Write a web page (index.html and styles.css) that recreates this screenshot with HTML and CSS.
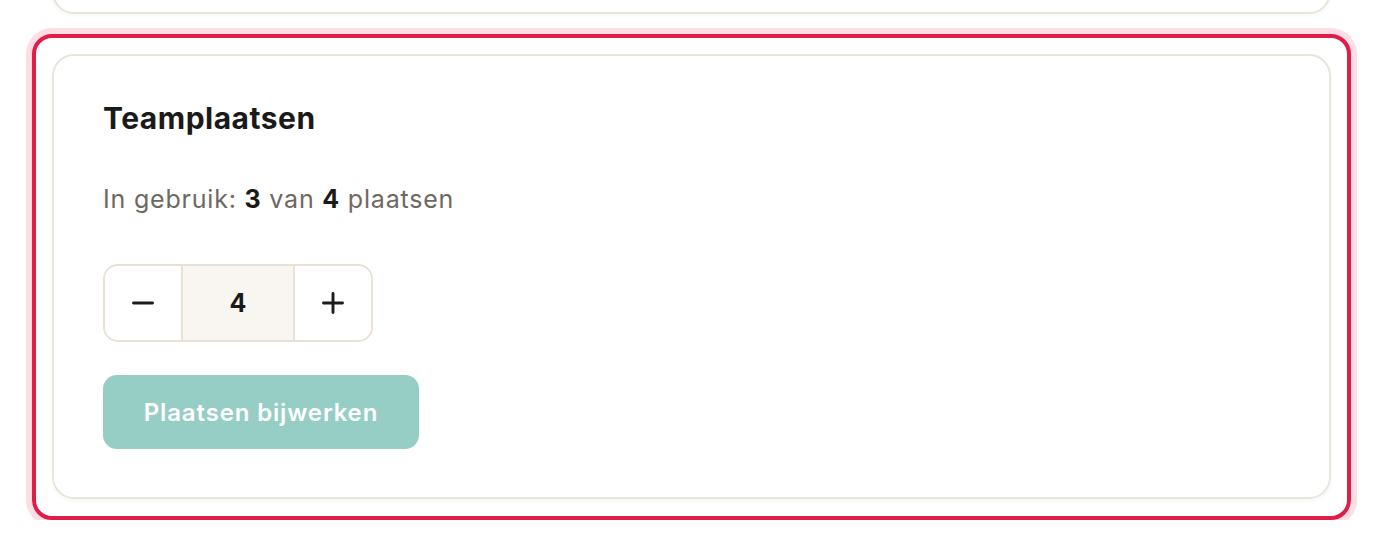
FILE: index.html
```html
<!DOCTYPE html>
<html lang="nl">
<head>
<meta charset="utf-8">
<title>Teamplaatsen</title>
<link rel="stylesheet" href="styles.css">
</head>
<body>
<div class="page">
  <div class="card card-prev"></div>
  <div class="highlight">
    <section class="card card-seats">
      <h2 class="title">Teamplaatsen</h2>
      <p class="usage">In gebruik: <strong>3</strong> van <strong>4</strong> plaatsen</p>
      <div class="stepper">
        <button class="step-btn" type="button" aria-label="Minder">
          <svg width="22" height="22" viewBox="0 0 22 22"><path d="M1.5 11h19" stroke="#1c1c1c" stroke-width="2.9" stroke-linecap="round"/></svg>
        </button>
        <div class="step-value">4</div>
        <button class="step-btn" type="button" aria-label="Meer">
          <svg width="22" height="22" viewBox="0 0 22 22"><path d="M1.5 11h19M11 1.5v19" stroke="#1c1c1c" stroke-width="2.9" stroke-linecap="round"/></svg>
        </button>
      </div>
      <button class="primary" type="button">Plaatsen bijwerken</button>
    </section>
  </div>
</div>
</body>
</html>
```

FILE: styles.css
```css
html, body {
  margin: 0;
  padding: 0;
  background: #ffffff;
}

body {
  font-family: Inter, "Liberation Sans", sans-serif;
  color: #1b1b1b;
  overflow: hidden;
}

.page {
  padding: 0 33px 0 32px;
  display: flex;
  flex-direction: column;
}

.card {
  background: #ffffff;
  border: 2px solid #e9e5db;
  border-radius: 22px;
  box-shadow: 0 2px 4px rgba(60, 50, 30, 0.04);
}

.card-prev {
  height: 100px;
  margin: -90.5px 20px 0 20px;
}

.highlight {
  margin-top: 20px;
  border: 4px solid #e01c48;
  border-radius: 20px;
  padding: 16px 16px 17px 16px;
  box-shadow: 0 0 0 6px #fcdee4;
}

.card-seats {
  padding: 42.5px 48px 48px 49px;
  display: flex;
  flex-direction: column;
  align-items: flex-start;
}

.title {
  margin: 0;
  font-size: 30px;
  font-weight: 700;
  letter-spacing: 0.5px;
  line-height: 40px;
  color: #1a1a1a;
}

.usage {
  margin: 46px 0 0 0;
  font-size: 25px;
  line-height: 30px;
  color: #6e6862;
  letter-spacing: 0.8px;
}

.usage strong {
  color: #1a1a1a;
  font-weight: 700;
}

.stepper {
  margin-top: 50px;
  display: flex;
  height: 78px;
  border: 2px solid #e8e1d5;
  border-radius: 15px;
  overflow: hidden;
  box-sizing: border-box;
}

.step-btn {
  width: 76px;
  border: 0;
  background: #ffffff;
  padding: 0;
  display: flex;
  align-items: center;
  justify-content: center;
  cursor: pointer;
}

.step-value {
  width: 110px;
  background: #f9f6f1;
  border-left: 2px solid #e8e1d5;
  border-right: 2px solid #e8e1d5;
  display: flex;
  align-items: center;
  justify-content: center;
  font-size: 25px;
  font-weight: 700;
  color: #1a1a1a;
}

.primary {
  margin-top: 33px;
  width: 316px;
  height: 74px;
  border: 0;
  border-radius: 14px;
  background: #96cec6;
  color: #ffffff;
  font-family: Inter, "Liberation Sans", sans-serif;
  font-size: 24px;
  font-weight: 600;
  letter-spacing: 0.85px;
  cursor: pointer;
}
```
